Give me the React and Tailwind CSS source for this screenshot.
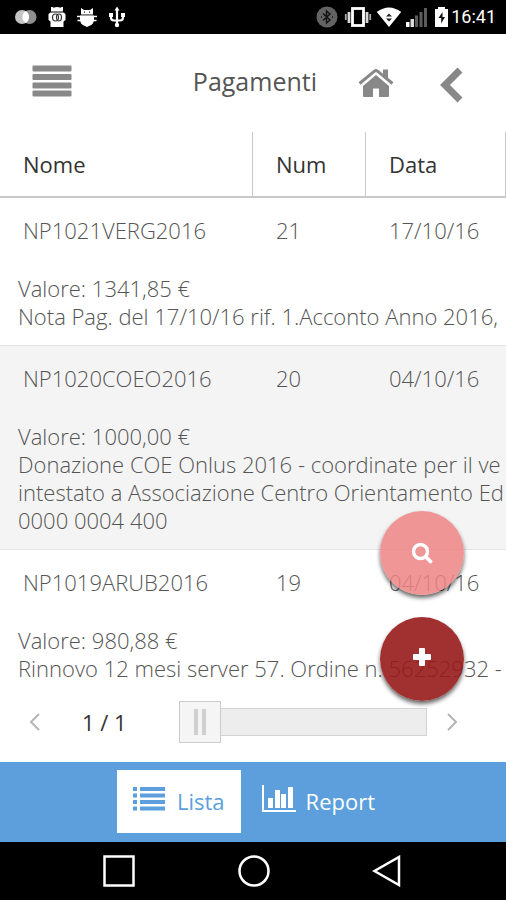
import React from "react";

const payments = [
    {
        name: "NP1021VERG2016",
        num: "21",
        date: "17/10/16",
        value: "1341,85 €",
        notes: ["Nota Pag. del 17/10/16 rif. 1.Acconto Anno 2016,"],
    },
    {
        name: "NP1020COEO2016",
        num: "20",
        date: "04/10/16",
        value: "1000,00 €",
        notes: [
            "Donazione COE Onlus 2016 - coordinate per il ve",
            "intestato a Associazione Centro Orientamento Ed",
            "0000 0004 400",
        ],
    },
    {
        name: "NP1019ARUB2016",
        num: "19",
        date: "04/10/16",
        value: "980,88 €",
        notes: ["Rinnovo 12 mesi server 57. Ordine n. 56252932 -"],
    },
];

const StatusBar = () => (
    <div className="flex h-[34px] items-center justify-between bg-black pl-[14px] pr-[10px] text-white">
        <div className="flex items-center gap-2.5">
            <svg width="24" height="22" viewBox="0 0 24 22">
                <circle cx="8" cy="11" r="7" fill="#c4c4c4" />
                <circle cx="15.500" cy="11" r="7" fill="#8f8f8f" />
                <path d="M11.700 5a7 7 0 0 1 0 12a7 7 0 0 1 0-12z" fill="#fff" />
            </svg>
            <svg width="18" height="22" viewBox="0 0 18 22" fill="#fff">
                <path d="M3 1h1.500l1 .8a8 8 0 0 1 7 0l1-.8H15v4.500H3zM2.500 6.500h13l2 1.500V14l-2 1.500V21h-13v-5.500L.500 14V8z" />
                <ellipse cx="7.500" cy="11.500" rx="3" ry="3.500" fill="none" stroke="#333" strokeWidth="1.200" />
                <ellipse cx="11" cy="11.500" rx="2.500" ry="3.500" fill="none" stroke="#333" strokeWidth="1.200" />
            </svg>
            <svg width="22" height="22" viewBox="0 0 22 22" fill="#fff">
                <path d="M5 2l3 2h6l3-2v6.500H5zM4 9.500h14V13a7 7 0 0 1-5 7l-2 1-2-1a7 7 0 0 1-5-7z" />
                <path d="M1 10.500h20M1.500 14.500h4M16.500 14.500h4" stroke="#fff" strokeWidth="1.300" />
                <path d="M8 6.200h1M13 6.200h1" stroke="#222" strokeWidth="1.300" />
            </svg>
            <svg width="18" height="22" viewBox="0 0 18 22" fill="none" stroke="#fff" strokeWidth="2.200">
                <path d="M9 3v16M3 9v2.500q0 3 3 3h6q3 0 3-3V9" />
                <path d="M9 .5l2.500 4h-5z M1 7h4v4H1z M13 7h4v4h-4z" fill="#fff" stroke="none" />
                <circle cx="9" cy="19" r="2.200" fill="#fff" stroke="none" />
            </svg>
        </div>
        <div className="flex items-center">
            <svg width="22" height="22" viewBox="0 0 22 22" className="mr-1.5">
                <circle cx="11" cy="11" r="10.500" fill="#636363" />
                <path d="M7 7.500l7 6.500-3.500 3V5L14 8l-7 6.500" fill="none" stroke="#111" strokeWidth="1.400" />
                <path d="M5 11h1M16 11h1" stroke="#111" strokeWidth="1.500" />
            </svg>
            <svg width="28" height="22" viewBox="0 0 28 22" className="mr-1">
                <rect x="8.500" y="2.500" width="11" height="17" fill="none" stroke="#fff" strokeWidth="2.800" />
                <path d="M5 6v11M23 6v11" stroke="#d8d8d8" strokeWidth="2.800" />
                <path d="M1.800 8v6M26.200 8v6" stroke="#aaa" strokeWidth="1.800" />
            </svg>
            <svg width="26" height="22" viewBox="0 0 26 22" className="mr-1">
                <path d="M.8 6Q13-3 25.200 6L13 21z" fill="#fff" />
                <path d="M13 7.500l3 3h-6zM13 15.500l3-3h-6z" fill="#222" />
            </svg>
            <svg width="22" height="22" viewBox="0 0 22 22" className="mr-1.5">
                <path d="M0 16h3.500v5H0z" fill="#fff" />
                <path d="M4.500 13H8v8H4.500z" fill="#ddd" />
                <path d="M9 9.500h3V21H9zM13.500 6h3v15h-3zM18 2h3v19h-3z" fill="#5c5c5c" />
            </svg>
            <svg width="15" height="22" viewBox="0 0 15 22" className="mr-0.5">
                <path d="M4 1h7v2h3v18H1V3h3z" fill="#fff" />
                <path d="M8.500 6L4.500 12h2.700v5.500L11 11H8.500z" fill="#111" />
            </svg>
            <span className="font-[Roboto,sans-serif] text-lg leading-none">16:41</span>
        </div>
    </div>
);

const Header = () => (
    <header className="flex h-[98px] items-center pb-1 pl-8 pr-[42px] text-[#888]">
        <button aria-label="Menu">
            <svg width="40" height="32" viewBox="0 0 40 32" fill="currentColor">
                <rect x="0.500" y="0.500" width="39" height="6" rx="1" />
                <rect x="0.500" y="9" width="39" height="6" rx="1" />
                <rect x="0.500" y="17.500" width="39" height="6" rx="1" />
                <rect x="0.500" y="25.500" width="39" height="6" rx="1" />
            </svg>
        </button>
        <h1 className="ml-auto text-[25px] text-[#555]">Pagamenti</h1>
        <a href="#home" aria-label="Home" className="ml-[41px] mt-1">
            <svg width="36" height="30" viewBox="0 0 36 30" fill="currentColor">
                <path d="M18 7L31 18v10q0 1-1 1h-9v-8.500h-6V29H6q-1 0-1-1V18z" />
                <path d="M1.500 15.500L16.500 3.200q1.500-1.200 3 0L34.500 15.500" fill="none" stroke="currentColor" strokeWidth="3" />
                <path d="M25 1.500h5v11L25 8z" />
            </svg>
        </a>
        <button aria-label="Indietro" className="ml-[46px] mt-2">
            <svg width="24" height="36" viewBox="0 0 24 36" fill="none">
                <path d="M20 3L5 18l15 15" stroke="currentColor" strokeWidth="7" />
            </svg>
        </button>
    </header>
);

const PaymentsTable = () => (
    <table className="w-full table-fixed border-separate border-spacing-0 text-left">
        <colgroup>
            <col className="w-1/2" />
            <col className="w-[113px]" />
            <col />
        </colgroup>
        <thead>
            <tr className="h-[66px] text-[#333]">
                {["Nome", "Num", "Data"].map((label) => (
                    <th
                        key={label}
                        className="border-b-2 border-r border-[#c8c8c8] pl-[23px] font-normal"
                    >
                        {label}
                    </th>
                ))}
            </tr>
        </thead>
        {payments.map((item) => (
            <tbody key={item.name} className="group font-light text-[#555] even:bg-[#f4f4f4]">
                <tr className="h-16">
                    <td className="pl-[23px]">{item.name}</td>
                    <td className="pl-[23px]">{item.num}</td>
                    <td className="pl-[23px]">{item.date}</td>
                </tr>
                <tr>
                    <td
                        colSpan={3}
                        className="overflow-hidden whitespace-pre border-b border-[#e4e4e4] pb-[15px] pl-[18px] pt-3 group-last:border-b-0 group-last:pb-0"
                    >
                        {[`Valore: ${item.value}`, ...item.notes].join("\n")}
                    </td>
                </tr>
            </tbody>
        ))}
    </table>
);

const Pager = () => (
    <div className="flex h-20 items-center bg-white pl-7 pr-[47px] text-[#333]">
        <button aria-label="Pagina precedente" className="text-[#b5b5b5]">
            <svg width="14" height="20" viewBox="0 0 14 20" fill="none" stroke="currentColor" strokeWidth="2">
                <path d="M11 2L3 10l8 8" />
            </svg>
        </button>
        <span className="ml-10">1 / 1</span>
        <input
            type="range"
            min="1"
            max="10"
            defaultValue="1"
            aria-label="Pagina"
            className="ml-13 h-[42px] min-w-0 flex-1 appearance-none bg-transparent [&::-webkit-slider-runnable-track]:h-7 [&::-webkit-slider-runnable-track]:bg-[#ededed] [&::-webkit-slider-runnable-track]:shadow-[inset_0_0_0_1px_#d4d4d4] [&::-webkit-slider-thumb]:-mt-[7px] [&::-webkit-slider-thumb]:box-border [&::-webkit-slider-thumb]:size-[42px] [&::-webkit-slider-thumb]:appearance-none [&::-webkit-slider-thumb]:border [&::-webkit-slider-thumb]:border-[#ccc] [&::-webkit-slider-thumb]:bg-[#f5f5f5] [&::-webkit-slider-thumb]:bg-[linear-gradient(90deg,#d0d0d0_4px,transparent_4px,transparent_8px,#d0d0d0_8px)] [&::-webkit-slider-thumb]:bg-[length:12px_26px] [&::-webkit-slider-thumb]:bg-center [&::-webkit-slider-thumb]:bg-no-repeat"
        />
        <button aria-label="Pagina successiva" className="ml-[18px] text-[#b5b5b5]">
            <svg width="14" height="20" viewBox="0 0 14 20" fill="none" stroke="currentColor" strokeWidth="2">
                <path d="M3 2l8 8-8 8" />
            </svg>
        </button>
    </div>
);

const FloatingActions = () => (
    <div className="absolute bottom-[61px] right-[42px] flex flex-col gap-[22px] text-white">
        <button
            aria-label="Cerca"
            className="flex size-[84px] items-center justify-center rounded-full bg-[#ef8485]/85 shadow-[0_3px_4px_rgba(0,0,0,0.6)]"
        >
            <svg width="22" height="22" viewBox="0 0 22 22" fill="none" stroke="currentColor">
                <circle cx="9.500" cy="9.500" r="7" strokeWidth="3.400" />
                <path d="M14.500 14.500l5 5" strokeWidth="3.800" strokeLinecap="round" />
            </svg>
        </button>
        <button
            aria-label="Aggiungi"
            className="flex size-[84px] items-center justify-center rounded-full bg-[#971919]/90 pb-1 shadow-[0_3px_4px_rgba(0,0,0,0.6)]"
        >
            <svg width="20" height="20" viewBox="0 0 20 20" fill="currentColor">
                <path d="M8 1h4q1 0 1 1v5h5q1 0 1 1v4q0 1-1 1h-5v5q0 1-1 1H8q-1 0-1-1v-5H2q-1 0-1-1V8q0-1 1-1h5V2q0-1 1-1z" />
            </svg>
        </button>
    </div>
);

const BottomTabs = () => (
    <nav className="flex h-20 items-center justify-center bg-[#5c9fdc] pb-0.5 pr-[14px]">
        <a href="#lista" className="flex h-[63px] items-center bg-white px-4 text-[#5c9fdc]">
            <svg width="32" height="26" viewBox="0 0 32 26" fill="currentColor" className="mb-1">
                <path d="M0 1h4v4H0zM7 1h25v4H7zM0 7.500h4v4H0zM7 7.500h25v4H7zM0 14h4v4H0zM7 14h25v4H7zM0 20.500h4v4H0zM7 20.500h25v4H7z" />
            </svg>
            <span className="ml-3">Lista</span>
        </a>
        <a href="#report" className="ml-5 flex h-[63px] items-center text-white">
            <svg width="36" height="28" viewBox="0 0 36 28" fill="currentColor" className="mb-1">
                <path d="M1 0h2v25h32v2H1zM7 13h5v10H7zM14 5h5v18h-5zM20 9h5v14h-5zM27 2h5v21h-5z" />
            </svg>
            <span className="ml-[9px]">Report</span>
        </a>
    </nav>
);

const SystemNav = () => (
    <div className="flex h-[58px] items-center justify-between bg-black pl-[103px] pr-[104px] text-white">
        <button aria-label="App recenti">
            <svg width="32" height="32" viewBox="0 0 32 32" fill="none" stroke="currentColor" strokeWidth="2.500">
                <rect x="1.500" y="1.500" width="29" height="29" />
            </svg>
        </button>
        <button aria-label="Schermata iniziale">
            <svg width="32" height="32" viewBox="0 0 32 32" fill="none" stroke="currentColor" strokeWidth="2.500">
                <circle cx="16" cy="16" r="14.500" />
            </svg>
        </button>
        <button aria-label="Torna indietro">
            <svg width="30" height="32" viewBox="0 0 30 32" fill="none" stroke="currentColor" strokeWidth="2.500">
                <path d="M27 2v28L2.500 16z" />
            </svg>
        </button>
    </div>
);

const App = () => {
    return (
        <div className="flex min-h-screen flex-col overflow-hidden bg-white font-['Open_Sans',sans-serif] text-[22px] leading-7">
            <StatusBar />
            <Header />
            <main className="relative flex-1">
                <PaymentsTable />
                <Pager />
                <FloatingActions />
            </main>
            <BottomTabs />
            <SystemNav />
        </div>
    );
};

export default App;
